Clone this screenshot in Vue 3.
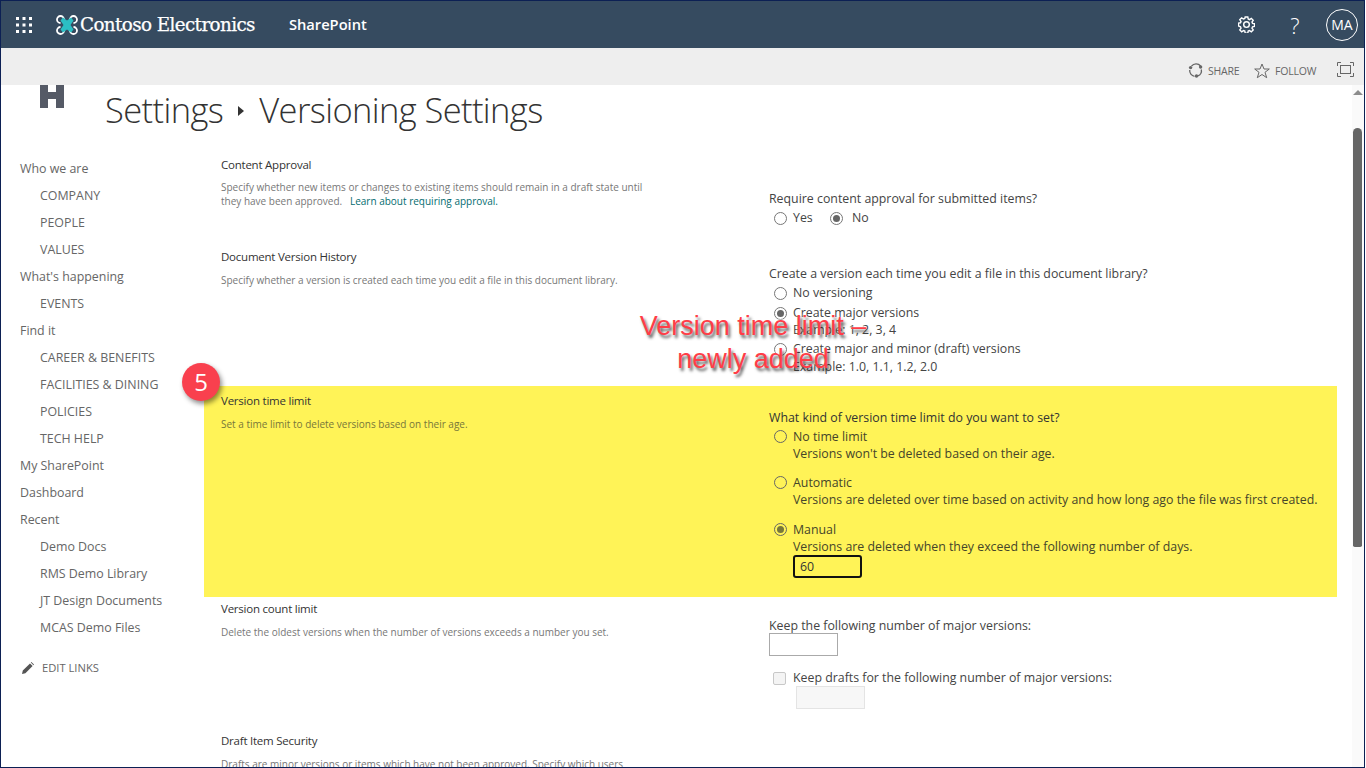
<script setup>
const nav = [
  { t: 'Who we are' }, { t: 'COMPANY', s: 1 }, { t: 'PEOPLE', s: 1 }, { t: 'VALUES', s: 1 },
  { t: "What's happening" }, { t: 'EVENTS', s: 1 }, { t: 'Find it' },
  { t: 'CAREER & BENEFITS', s: 1 }, { t: 'FACILITIES & DINING', s: 1 }, { t: 'POLICIES', s: 1 }, { t: 'TECH HELP', s: 1 },
  { t: 'My SharePoint' }, { t: 'Dashboard' }, { t: 'Recent' },
  { t: 'Demo Docs', s: 1 }, { t: 'RMS Demo Library', s: 1 }, { t: 'JT Design Documents', s: 1 }, { t: 'MCAS Demo Files', s: 1 }
]
</script>

<template>
  <div class="frame">
    <header class="topbar">
      <svg class="waffle" width="16" height="16" viewBox="0 0 16 16" fill="#fff">
        <rect v-for="p in [0,6.5,13]" :key="'a'+p" :x="p" y="0" width="3" height="3" />
        <rect v-for="p in [0,6.5,13]" :key="'b'+p" :x="p" y="6.5" width="3" height="3" />
        <rect v-for="p in [0,6.5,13]" :key="'c'+p" :x="p" y="13" width="3" height="3" />
      </svg>
      <svg class="logo" width="22" height="24" viewBox="0 0 22 24" fill="none">
        <g stroke="#fff" stroke-width="1.8">
          <path d="M8 6.500A3.500 3.500 0 1 0 4.500 10" />
          <path d="M14 6.500A3.500 3.500 0 1 1 17.500 10" />
          <path d="M8 17.500A3.500 3.500 0 1 1 4.500 14" />
          <path d="M14 17.500A3.500 3.500 0 1 0 17.500 14" />
        </g>
        <path d="M7 4.500L11 7.500 15 4.500 17.500 7.500 14.500 12 17.500 16.500 15 19.500 11 16.500 7 19.500 4.500 16.500 7.500 12 4.500 7.500z" fill="#2bbfc4" />
      </svg>
      <span class="brand">Contoso Electronics</span>
      <span class="product">SharePoint</span>
      <span class="spacer"></span>
      <svg class="gear" width="17" height="17" viewBox="0 0 18 18" fill="none" stroke="#fff" stroke-width="1.500">
        <path d="M7.600 1h2.800l.4 2.200 1.400.6 1.900-1.300 2 2-1.300 1.900.6 1.400 2.100.4v2.800l-2.100.4-.6 1.400 1.300 1.900-2 2-1.900-1.300-1.400.6-.4 2.100H7.600l-.4-2.100-1.400-.6-1.900 1.300-2-2 1.300-1.900-.6-1.400L.5 10.400V7.600l2.100-.4.6-1.400-1.300-1.900 2-2 1.900 1.300 1.400-.6z" />
        <circle cx="9" cy="9" r="3" />
      </svg>
      <span class="help">?</span>
      <span class="avatar">MA</span>
    </header>

    <div class="subbar">
      <svg class="share" width="15" height="15" viewBox="0 0 15 15" fill="none">
        <path d="M3.500 3.200A5.800 5.800 0 0 1 12.600 3M13.300 6.500a5.800 5.800 0 0 1-3.300 6.400M6.500 13.300A5.800 5.800 0 0 1 1.700 7" stroke="#666" stroke-width="1.300" />
        <circle cx="2.600" cy="4.600" r="1.700" fill="#666" /><circle cx="12.600" cy="4" r="1.700" fill="#666" /><circle cx="8.500" cy="13" r="1.700" fill="#666" />
      </svg>
      <span class="cmd">SHARE</span>
      <svg class="star" width="16" height="16" viewBox="0 0 16 16" fill="none" stroke="#666" stroke-width="1">
        <path d="M8 1l2 5h5.300l-4.300 3.300 1.700 5.400L8 11.500l-4.700 3.200L5 9.300.7 6H6z" />
      </svg>
      <span class="cmd">FOLLOW</span>
      <svg class="focus" width="17" height="15" viewBox="0 0 17 15" fill="none" stroke="#666">
        <path d="M.5 4V.5H4M13 .5h3.500V4M16.500 11v3.500H13M4 14.500H.5V11" />
        <rect x="3.500" y="3.500" width="10" height="8" />
      </svg>
    </div>

    <div class="titlerow">
      <svg class="sitelogo" width="24" height="23" viewBox="0 0 24 23" fill="#555a66">
        <path d="M0 0h8v7h8V0h8v23h-8v-9H8v9H0z" />
      </svg>
      <h1 class="title">
        <span>Settings</span>
        <svg class="crumb" width="6" height="10" viewBox="0 0 6 10" fill="#333"><path d="M0 0l6 5-6 5z" /></svg>
        <span>Versioning Settings</span>
      </h1>
    </div>

    <div class="body">
      <nav class="nav">
        <a v-for="n in nav" :key="n.t" class="navitem" :class="{ sub: n.s }">{{ n.t }}</a>
        <a class="editlinks">
          <svg width="12" height="12" viewBox="0 0 12 12" fill="#555"><path d="M0 12l.8-3.400L8 1.400 10.600 4 3.400 11.200zM8.800.6l.6-.6L12 2.600l-.6.6z" /></svg>
          <span>EDIT LINKS</span>
        </a>
      </nav>

      <main class="form">
        <section class="row r1">
          <div class="left">
            <h3>Content Approval</h3>
            <p>Specify whether new items or changes to existing items should remain in a draft state until<br />they have been approved. &nbsp; <a class="link">Learn about requiring approval.</a></p>
          </div>
          <div class="right">
            <div class="q">Require content approval for submitted items?</div>
            <div class="inline">
              <span class="radio first"></span><span class="lab first">Yes</span>
              <span class="radio on"></span><span class="lab">No</span>
            </div>
          </div>
        </section>

        <section class="row r2">
          <div class="left">
            <h3>Document Version History</h3>
            <p>Specify whether a version is created each time you edit a file in this document library.</p>
          </div>
          <div class="right">
            <div class="q">Create a version each time you edit a file in this document library?</div>
            <div class="opt o1"><span class="radio"></span><span>No versioning</span></div>
            <div class="opt o2"><span class="radio on"></span><div><div>Create major versions</div><div class="ex">Example: 1, 2, 3, 4</div></div></div>
            <div class="opt o3"><span class="radio"></span><div><div>Create major and minor (draft) versions</div><div class="ex">Example: 1.0, 1.1, 1.2, 2.0</div></div></div>
          </div>
        </section>

        <section class="row r3">
          <div class="left">
            <h3>Version time limit</h3>
            <p>Set a time limit to delete versions based on their age.</p>
          </div>
          <div class="right">
            <div class="q">What kind of version time limit do you want to set?</div>
            <div class="opt t1"><span class="radio"></span><div><div>No time limit</div><div>Versions won't be deleted based on their age.</div></div></div>
            <div class="opt t2"><span class="radio"></span><div><div>Automatic</div><div>Versions are deleted over time based on activity and how long ago the file was first created.</div></div></div>
            <div class="opt t3"><span class="radio on"></span><div><div>Manual</div><div>Versions are deleted when they exceed the following number of days.</div><div class="days">60</div></div></div>
          </div>
        </section>

        <section class="row r4">
          <div class="left">
            <h3>Version count limit</h3>
            <p>Delete the oldest versions when the number of versions exceeds a number you set.</p>
          </div>
          <div class="right">
            <div class="q">Keep the following number of major versions:</div>
            <div class="box"></div>
            <div class="drafts"><span class="check"></span><span>Keep drafts for the following number of major versions:</span></div>
            <div class="box disabled"></div>
          </div>
        </section>

        <section class="row r5">
          <div class="left">
            <h3>Draft Item Security</h3>
            <p>Drafts are minor versions or items which have not been approved. Specify which users</p>
          </div>
        </section>
      </main>
    </div>

    <div class="scroll">
      <span class="up"></span>
      <span class="thumb"></span>
    </div>
    <div class="badge">5</div>
    <div class="note">Version time limit –<br />newly added</div>
  </div>
</template>

<style>
html, body { margin: 0; overflow: hidden; background: #fff; }
</style>

<style scoped>
.frame {
  position: relative; width: 1365px; height: 768px; box-sizing: border-box; overflow: hidden;
  border: 1px solid #0c2054; background: #fff;
  font-family: "Open Sans", "Noto Sans", sans-serif; color: #444;
}
.topbar { height: 47px; background: #364b60; display: flex; align-items: center; color: #fff; }
.waffle { margin-left: 15px; }
.logo { margin-left: 24px; flex: none; }
.brand { margin-left: 2px; font-family: "DejaVu Serif", serif; font-size: 18.3px; letter-spacing: -0.58px; white-space: nowrap; -webkit-text-stroke: 0.25px #fff; }
.product { margin-left: 34px; margin-bottom: 2px; font-size: 14.7px; font-weight: 600; }
.spacer { flex: 1; }
.gear { margin-right: 34px; }
.help { font-size: 22px; font-weight: 300; margin-right: 25px; width: 12px; text-align: center; }
.avatar { width: 30px; height: 30px; border: 1px solid #fff; border-radius: 50%; margin-right: 6px; display: flex; align-items: center; justify-content: center; font-size: 14px; }
.subbar { height: 37px; box-sizing: border-box; padding-top: 8px; background: #eee; display: flex; align-items: center; }
.share { margin-left: 1187px; }
.cmd { font-size: 10.5px; color: #666; margin-left: 5px; letter-spacing: -0.2px; width: 45px; }
.star { margin-left: 1px; }
.focus { margin-left: 17px; margin-top: -3px; }
.titlerow { display: flex; height: 73px; }
.sitelogo { margin-left: 39px; }
.title { margin: 0 0 0 41px; display: flex; align-items: center; height: 48px; font-size: 34.5px; font-weight: 300; color: #333; white-space: nowrap; letter-spacing: -0.6px; }
.crumb { margin: 4px 15px 0 15px; }
.body { display: flex; }
.nav { width: 203px; flex: none; display: flex; flex-direction: column; margin-top: -3px; }
.navitem { height: 27px; line-height: 27px; padding-left: 19px; font-size: 12.4px; color: #666; white-space: nowrap; }
.navitem.sub { padding-left: 39px; }
.editlinks { margin-top: 13px; padding-left: 21px; display: flex; align-items: center; gap: 8px; font-size: 11.2px; color: #666; height: 27px; }
.form { width: 1133px; flex: none; }
.row { display: flex; box-sizing: border-box; }
.left { width: 565px; flex: none; padding-left: 17px; box-sizing: border-box; }
.left h3 { margin: 0; font-size: 11.5px; font-weight: 400; line-height: 16px; color: #333; letter-spacing: -0.23px; }
.left p { margin: 8px 0 0; font-size: 10px; line-height: 14px; color: #777; white-space: nowrap; }
.link { color: #036c70; }
.right { flex: 1; font-size: 12.35px; line-height: 16px; color: #444; white-space: nowrap; }
.r1 { height: 92px; }
.r1 .left, .r2 .left { margin-top: -1px; }
.r1 .left p { margin-top: 7px; }
.r1 .right { padding-top: 33px; }
.r2 { height: 136px; }
.r2 .right { padding-top: 16px; }
.r3 { height: 211px; background: #fff357; padding-top: 7px; }
.r3 .right { padding-top: 17px; line-height: 17px; color: #45452a; }
.r3 .left p { color: #77773a; }
.r3 .q { color: #333; line-height: 16px; }
.r4 { height: 132px; padding-top: 4px; }
.r4 .right { padding-top: 17px; }
.r5 { height: 60px; padding-top: 4px; }
.inline { display: flex; align-items: center; margin-top: 3px; height: 16px; }
.inline .radio { margin-left: 5px; margin-right: 9px; }
.inline .radio.first { margin-right: 6px; }
.inline .lab { width: 29px; }
.inline .lab.first { width: 32px; }
.radio { width: 11px; height: 11px; border: 1px solid #777; border-radius: 50%; flex: none; background: #fff; position: relative; display: inline-block; }
.radio.on::after { content: ""; position: absolute; inset: 2px; border-radius: 50%; background: #666; }
.r3 .radio { background: transparent; border-color: #666; }
.r3 .radio.on::after { background: #77773a; }
.opt { display: flex; gap: 6px; padding-left: 5px; }
.opt > .radio { margin-top: 2px; }
.o1 { margin-top: 3px; }
.o2 { margin-top: 4px; }
.o3 { margin-top: 3px; }
.ex { margin-top: 1px; }
.o3 .ex { margin-top: 2px; }
.t1 { margin-top: 2px; }
.t2 { margin-top: 12px; }
.t3 { margin-top: 13px; }
.days { box-sizing: border-box; width: 69px; height: 23px; border: 2px solid #111; border-radius: 3px; padding-left: 5px; line-height: 19px; color: #333; }
.box { box-sizing: border-box; width: 69px; height: 23px; border: 1px solid #aaa; }
.r4 .box { margin-top: -1px; }
.r4 .box.disabled { margin-left: 27px; background: #f7f7f7; border-color: #e4e4e4; margin-top: 0; }
.drafts { display: flex; align-items: center; gap: 7px; padding-left: 4px; margin-top: 14px; }
.check { width: 11px; height: 11px; border: 1px solid #c8c8c8; border-radius: 2px; background: #f4f4f4; }
.scroll { position: absolute; right: 0; top: 84px; bottom: 0; width: 12px; background: #fafafa; }
.up { position: absolute; left: 1px; top: 5px; width: 0; height: 0; border-left: 5px solid transparent; border-right: 5px solid transparent; border-bottom: 5px solid #8c8c8c; }
.thumb { position: absolute; left: 1px; top: 43px; width: 9px; height: 419px; border-radius: 5px 5px 2px 2px; background: #666; }
.badge { position: absolute; left: 181px; top: 362px; width: 38px; height: 38px; border-radius: 50%; background: #f9404e; color: #fff; font-size: 24px; line-height: 38px; text-align: center; box-shadow: 2px 3px 5px rgba(0,0,0,.45); }
.note { position: absolute; left: 622px; top: 309px; width: 260px; text-align: center; font-family: "Liberation Sans", Arial, sans-serif; font-size: 27px; line-height: 33px; color: #ff3d47; text-shadow: 2px 3px 3px rgba(40,40,40,.75), -1px -1px 2px rgba(255,255,255,.6); white-space: nowrap; }
</style>
